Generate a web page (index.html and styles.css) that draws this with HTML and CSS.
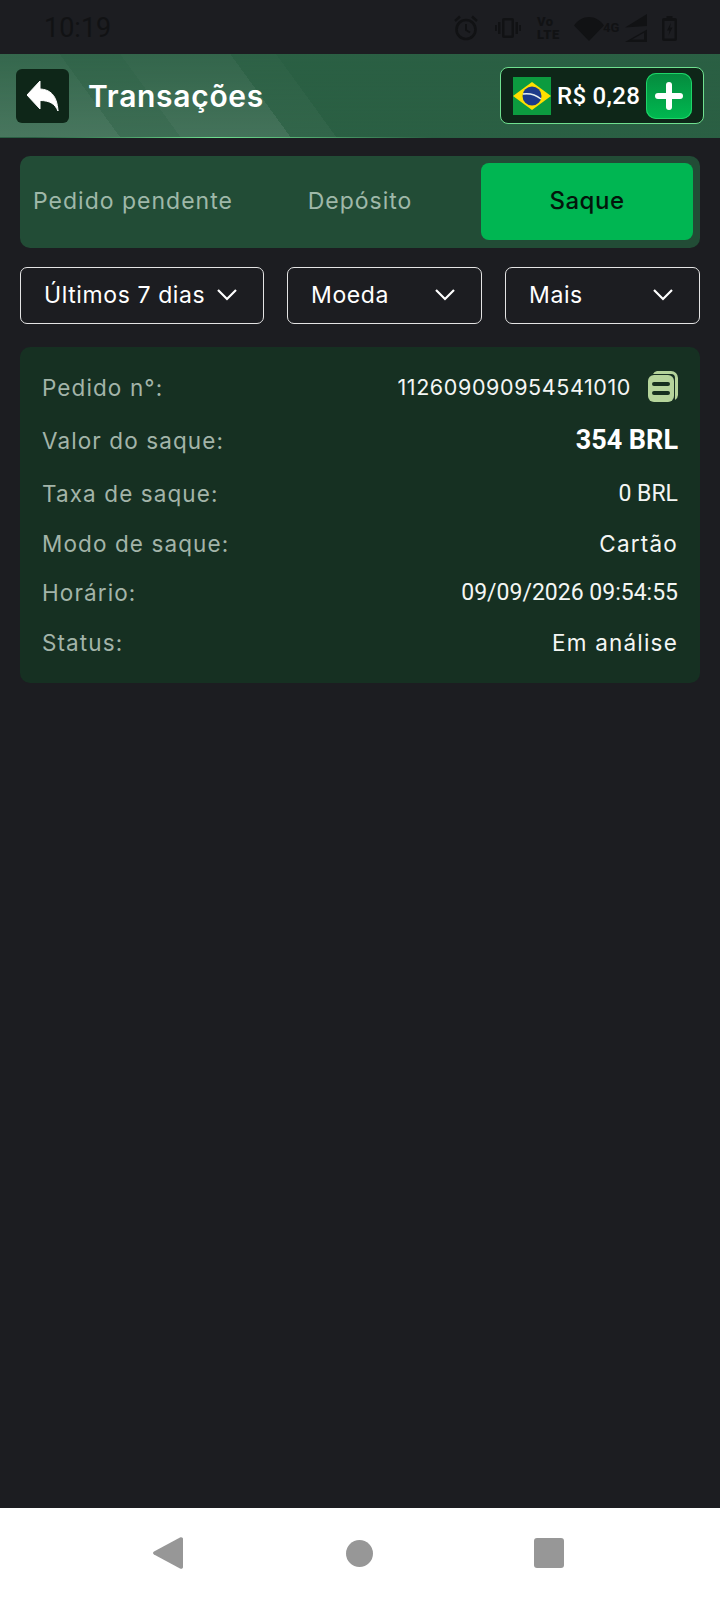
FILE: index.html
```html
<!DOCTYPE html>
<html lang="pt">
<head>
    <meta charset="UTF-8">
    <meta name="viewport" content="width=device-width, initial-scale=1.0">
    <title>Transações</title>
    <link rel="stylesheet" href="styles.css">
</head>
<body>
    <div class="app">
        <div class="status-bar">
            <span class="clock">10:19</span>
            <div class="status-icons">
                <svg class="ic-alarm" width="24" height="26" viewBox="0 0 24 26" fill="none" stroke="#111214" stroke-width="2.600"><circle cx="12" cy="14.500" r="9.500"/><path d="M12 9v6l4 2.500" stroke-width="2"/><path d="M1 6l5-4.500M23 6l-5-4.500" stroke-width="2.400"/></svg>
                <svg class="ic-vib" width="26" height="20" viewBox="0 0 26 20" fill="#111214"><path d="M7 2a2 2 0 0 1 2-2h8a2 2 0 0 1 2 2v16a2 2 0 0 1-2 2H9a2 2 0 0 1-2-2zm2.500.5v15h7v-15z"/><path d="M3 4h2.500v12H3zM20.500 4H23v12h-2.500zM0 7h1.800v6H0zM24.200 7H26v6h-1.800z"/></svg>
                <span class="volte"><b>Vo</b><b>LTE</b></span>
                <svg class="ic-wifi" width="30" height="25" viewBox="0 0 30 25" fill="#111214"><path d="M15 25L0 9.500C4 4 9 1 15 1s11 3 15 8.500z"/></svg>
                <span class="net">4G</span>
                <svg class="ic-signal" width="22" height="28" viewBox="0 0 22 28" fill="#111214"><path d="M22 0v12L0 13.500zM22 15.500V28H0zM19 18.800L7 25.500h12z" fill-rule="evenodd"/></svg>
                <svg class="ic-battery" width="15" height="25" viewBox="0 0 15 25" fill="#111214"><path d="M4.500 0h6v2H13a2 2 0 0 1 2 2v19a2 2 0 0 1-2 2H2a2 2 0 0 1-2-2V4a2 2 0 0 1 2-2h2.500zM2.500 5v17.500h10V5z" fill-rule="evenodd"/><path d="M9 6.500l-4 8h2.500l-1 5 4-8H8z"/></svg>
            </div>
        </div>

        <header class="top-bar">
            <button class="back-btn">
                <svg width="32" height="30" viewBox="0 0 32 30" fill="#fff"><path d="M13 0v8c10 .5 17 6 18 22-3-7-8-10.500-18-10.500V28L0 14z" stroke="#fff" stroke-linejoin="round" stroke-width="1"/></svg>
            </button>
            <h1>Transações</h1>
            <div class="balance">
                <svg class="flag" width="38" height="38" viewBox="0 0 38 38"><rect width="38" height="38" fill="#0c9b3f"/><path d="M0 19L19 5l19 14-19 14z" fill="#fedf00"/><circle cx="19" cy="19" r="9.500" fill="#1d3a8a"/><path d="M10 17c7-1 13 1 18 5" stroke="#e8eef0" stroke-width="1.300" fill="none"/></svg>
                <span class="amount">R$ 0,28</span>
                <span class="plus"><i></i><i></i></span>
            </div>
        </header>

        <main class="content">
            <div class="tabs">
                <div class="tab tab-first">Pedido pendente</div>
                <div class="tab tab-middle">Depósito</div>
                <div class="tab active">Saque</div>
            </div>

            <div class="filters">
                <div class="filter filter-date"><span>Últimos 7 dias</span><svg width="20" height="12" viewBox="0 0 20 12" fill="none" stroke="#fff" stroke-width="2.200"><path d="M1 1l9 9 9-9"/></svg></div>
                <div class="filter filter-coin"><span>Moeda</span><svg width="20" height="12" viewBox="0 0 20 12" fill="none" stroke="#fff" stroke-width="2.200"><path d="M1 1l9 9 9-9"/></svg></div>
                <div class="filter filter-more"><span>Mais</span><svg width="20" height="12" viewBox="0 0 20 12" fill="none" stroke="#fff" stroke-width="2.200"><path d="M1 1l9 9 9-9"/></svg></div>
            </div>

            <div class="card">
                <div class="row row-order">
                    <span class="label">Pedido n°:</span>
                    <span class="value order-no">112609090954541010
                        <svg class="copy" width="30" height="32" viewBox="0 0 30 32"><path d="M9 0h14a7 7 0 0 1 7 7v17a6 6 0 0 1-3 5V7a4 4 0 0 0-4-4H5a6 6 0 0 1 4-3z" fill="#b5d49b"/><rect y="4" width="26" height="27" rx="6" fill="#b5d49b"/><path d="M6 13h14M6 22h14" stroke="#16301f" stroke-width="4" stroke-linecap="round"/></svg>
                    </span>
                </div>
                <div class="row row-amount">
                    <span class="label">Valor do saque:</span>
                    <span class="value num big">354 BRL</span>
                </div>
                <div class="row row-fee">
                    <span class="label">Taxa de saque:</span>
                    <span class="value num">0 BRL</span>
                </div>
                <div class="row row-mode">
                    <span class="label">Modo de saque:</span>
                    <span class="value">Cartão</span>
                </div>
                <div class="row row-time">
                    <span class="label">Horário:</span>
                    <span class="value num">09/09/2026 09:54:55</span>
                </div>
                <div class="row row-status">
                    <span class="label">Status:</span>
                    <span class="value">Em análise</span>
                </div>
            </div>
        </main>

        <nav class="nav-bar">
            <svg width="30" height="32" viewBox="0 0 30 32" fill="#979797"><path d="M27 .5c1.500-.8 3 0 3 1.500v28c0 1.500-1.500 2.300-3 1.500L1 17.500c-1.300-.8-1.300-2.200 0-3z"/></svg>
            <span class="nav-home"></span>
            <span class="nav-recent"></span>
        </nav>
    </div>
</body>
</html>
```

FILE: styles.css
```css
* {
    box-sizing: border-box;
}
html, body {
    margin: 0;
    height: 100%;
}
body {
    font-family: Inter, "Open Sans", sans-serif;
    background: #1c1d21;
    color: #fff;
}
.app {
    height: 1600px;
    display: flex;
    flex-direction: column;
}

/* status bar */
.status-bar {
    height: 54px;
    display: flex;
    align-items: center;
    justify-content: space-between;
    padding: 2px 43px 0 44px;
    color: #111214;
}
.clock {
    font-family: Roboto, sans-serif;
    font-size: 27px;
}
.status-icons {
    display: flex;
    align-items: center;
}
.ic-vib {
    margin-left: 17px;
}
.volte {
    display: flex;
    flex-direction: column;
    font-family: Roboto, sans-serif;
    font-size: 13px;
    line-height: 13px;
    margin-left: 16px;
    width: 25px;
}
.volte b {
    font-weight: 900;
    letter-spacing: .5px;
}
.ic-wifi {
    margin-left: 12px;
}
.net {
    font-family: Roboto, sans-serif;
    font-weight: 700;
    font-size: 13px;
    align-self: flex-end;
    margin: 0 0 7px -1px;
    width: 22px;
}
.ic-battery {
    margin-left: 15px;
}

/* header */
.top-bar {
    height: 84px;
    display: flex;
    align-items: center;
    padding: 0 16px;
    border-bottom: 1px solid;
    border-image: linear-gradient(90deg, #2a5f43 5%, #6fe08f 30%, #2a5f43 60%) 1;
    background:
        linear-gradient(to bottom, rgba(42,95,67,.65), rgba(42,95,67,0)),
        linear-gradient(54deg, rgba(255,255,255,.14) 0 97px, rgba(255,255,255,.09) 97px 146px, rgba(255,255,255,.12) 146px 235px, rgba(255,255,255,.04) 235px 272px, transparent 272px),
        #2a5f43;
}
.back-btn {
    width: 53px;
    height: 54px;
    border: 0;
    padding: 0;
    border-radius: 6px;
    background: #0e2618;
    display: flex;
    align-items: center;
    justify-content: center;
}
.top-bar h1 {
    margin: 0 0 0 19px;
    font-size: 30px;
    font-weight: 600;
    letter-spacing: .7px;
}
.balance {
    margin-left: auto;
    width: 204px;
    height: 57px;
    display: flex;
    align-items: center;
    padding: 0 11px 0 12px;
    background: #0e2618;
    border: 1px solid #6fe08f;
    border-radius: 8px;
}
.amount {
    font-family: Roboto, sans-serif;
    font-size: 24px;
    font-weight: 500;
    margin-left: 6px;
    letter-spacing: .3px;
}
.plus {
    position: relative;
    margin-left: auto;
    width: 46px;
    height: 46px;
    border-radius: 10px;
    background: linear-gradient(#058a3e, #00b950);
    box-shadow: inset 0 0 0 1px #1ed568;
}
.plus i {
    position: absolute;
    background: #fff;
    border-radius: 3px;
    left: 9px;
    top: 20px;
    width: 28px;
    height: 6px;
}
.plus i + i {
    left: 20px;
    top: 9px;
    width: 6px;
    height: 28px;
}

/* content */
.content {
    flex: 1;
    padding: 18px 20px 0;
}
.tabs {
    height: 92px;
    padding: 7px;
    display: flex;
    align-items: center;
    background: #224c36;
    border-radius: 10px;
}
.tab {
    font-size: 23px;
    color: #9fb8a9;
    letter-spacing: 1px;
}
.tab-first {
    width: 218px;
    padding-left: 6px;
    white-space: nowrap;
    margin-top: -2px;
}
.tab-middle {
    width: 230px;
    text-align: center;
    margin-top: -2px;
}
.tab.active {
    width: 212px;
    height: 77px;
    margin-bottom: 1px;
    display: flex;
    align-items: center;
    justify-content: center;
    background: #00b652;
    color: #03150b;
    font-size: 24px;
    font-weight: 500;
    letter-spacing: .5px;
    border-radius: 8px;
    margin-left: auto;
    padding-bottom: 2px;
}
.filters {
    display: flex;
    justify-content: space-between;
    margin-top: 19px;
}
.filter {
    height: 57px;
    display: flex;
    align-items: center;
    justify-content: space-between;
    padding: 0 26px 2px 23px;
    border: 1px solid #e4e4e4;
    border-radius: 7px;
    font-size: 23px;
    letter-spacing: .6px;
}
.filter-date {
    width: 244px;
}
.filter-coin {
    width: 195px;
}
.filter-more {
    width: 195px;
}
.card {
    height: 336px;
    margin-top: 23px;
    padding: 23px 22px 0;
    background: #163022;
    border-radius: 10px;
}
.row {
    display: flex;
    align-items: center;
    justify-content: space-between;
    height: 34px;
}
.row-amount {
    margin-top: 19px;
}
.row-fee {
    margin-top: 19px;
}
.row-mode {
    margin-top: 16px;
}
.row-time {
    margin-top: 15px;
}
.row-status {
    margin-top: 16px;
}
.label {
    font-size: 22.500px;
    color: #a3b4a9;
    letter-spacing: 1.100px;
}
.value {
    font-size: 22.500px;
    color: #f4f6f4;
    display: flex;
    align-items: center;
    letter-spacing: 1.200px;
}
.order-no {
    font-size: 21.500px;
    letter-spacing: .6px;
}
.num {
    font-family: Roboto, sans-serif;
    font-size: 23px;
    letter-spacing: 0;
}
.big {
    font-size: 27px;
    font-weight: 700;
    color: #fff;
}
.copy {
    margin-left: 17px;
}

/* android nav */
.nav-bar {
    height: 92px;
    background: #fff;
    display: flex;
    align-items: center;
    padding: 0 0 2px 153px;
}
.nav-home {
    width: 27px;
    height: 27px;
    border-radius: 50%;
    background: #979797;
    margin-left: 163px;
}
.nav-recent {
    width: 30px;
    height: 30px;
    border-radius: 3px;
    background: #979797;
    margin-left: 161px;
}
```
